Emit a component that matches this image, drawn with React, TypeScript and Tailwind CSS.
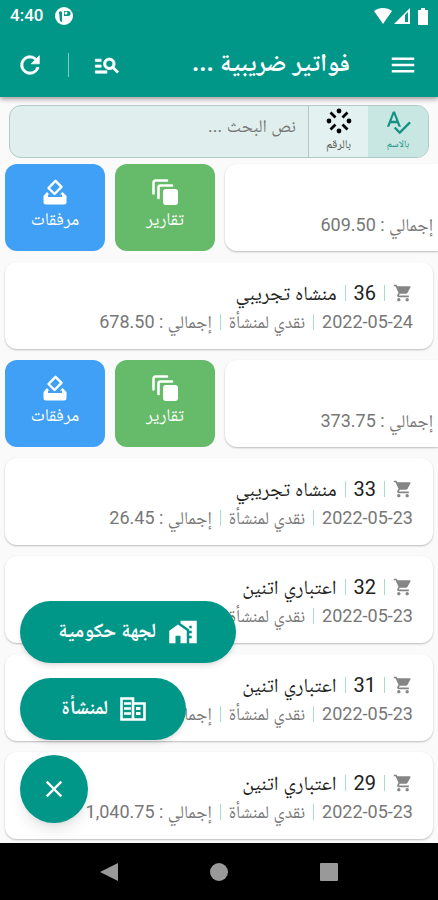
import React from "react";
import {
  MdClose,
  MdHomeWork,
  MdManageSearch,
  MdMenu,
  MdRefresh,
  MdShoppingCart,
  MdSpellcheck,
} from "react-icons/md";

type Invoice = {
  id: number;
  name: string;
  date: string;
  total: string;
  swiped?: boolean;
};

const invoices: Invoice[] = [
  { id: 37, name: "منشاه تجريبي", date: "2022-05-24", total: "609.50", swiped: true },
  { id: 36, name: "منشاه تجريبي", date: "2022-05-24", total: "678.50" },
  { id: 34, name: "منشاه تجريبي", date: "2022-05-23", total: "373.75", swiped: true },
  { id: 33, name: "منشاه تجريبي", date: "2022-05-23", total: "26.45" },
  { id: 32, name: "اعتباري اتنين", date: "2022-05-23", total: "" },
  { id: 31, name: "اعتباري اتنين", date: "2022-05-23", total: "" },
  { id: 29, name: "اعتباري اتنين", date: "2022-05-23", total: "1,040.75" },
];

const CopiesIcon = () => (
  <svg viewBox="0 0 26 26" className="size-[26px]" fill="none" stroke="currentColor" strokeWidth="2.6" strokeLinecap="round">
    <path d="M1.500 14.500V3.500a2 2 0 0 1 2-2h11.500" />
    <path d="M6.500 19V8.500a2 2 0 0 1 2-2h11.500" />
    <rect x="11" y="10" width="15" height="16" rx="3" fill="currentColor" stroke="none" />
  </svg>
);

const BallotIcon = () => (
  <svg viewBox="0 0 24 26" className="h-[26px] w-6" fill="currentColor">
    <path d="M12.500 1.800L18.500 7.800L11.500 15L5.500 9z" fill="none" stroke="currentColor" strokeWidth="2.400" strokeLinejoin="round" />
    <path d="M4 13l2.500 2.500H5V18h14v-2.500h-2l2.500-2.500 4 4V23a2.500 2.500 0 0 1-2.500 2.500H3A2.500 2.500 0 0 1 .5 23v-6z" />
  </svg>
);

const BurstIcon = () => (
  <svg viewBox="0 0 26 26" className="size-[26px]" stroke="currentColor" strokeWidth="2.8" fill="currentColor">
    <path d="M4.500 4.500l5 5M21.500 4.500l-5 5M4.500 21.500l5-5M21.500 21.500l-5-5" />
    <g stroke="none">
      <circle cx="13" cy="3" r="2.400" />
      <circle cx="13" cy="23" r="2.400" />
      <circle cx="3" cy="13" r="2.400" />
      <circle cx="23" cy="13" r="2.400" />
    </g>
  </svg>
);

const BuildingIcon = () => (
  <svg viewBox="0 0 26 24" className="h-6 w-[26px]" fill="none" stroke="currentColor" strokeWidth="2.600">
    <path d="M1.500 1.500h11.500v21H1.500zM13 6.500h11.500v16H13" />
    <path d="M4 6.500h7M4 11.500h7M4 16.500h7" />
    <path d="M16 11.500h4.500M16 16.500h4.500" strokeWidth="3" />
  </svg>
);

const StatusBar = () => (
  <div dir="ltr" className="flex h-8 items-center justify-between pl-[10px] pr-2">
    <div className="flex items-center gap-3">
      <span className="text-[17px] font-medium">4:40</span>
      <svg viewBox="0 0 18 18" className="size-[18px]">
        <circle cx="9" cy="9" r="9" fill="#fff" />
        <path d="M4 5a2 2 0 0 1 3 0v10l-2-1zM9 4h4a2 2 0 0 1 0 5H9z" fill="#009688" />
        <circle cx="11" cy="6" r="1.500" fill="#fff" />
      </svg>
    </div>
    <div className="flex items-center gap-[2px]">
      <svg viewBox="0 0 18 16" className="h-4 w-[18px]" fill="currentColor">
        <path d="M0 3C5-1 13-1 18 3L9 16z" />
      </svg>
      <svg viewBox="0 0 16 16" className="size-4">
        <path d="M16 0v16H0z" fill="#fff" />
        <path d="M11 7l3-3V14h-3z" fill="#009688" />
      </svg>
      <svg viewBox="0 0 18 17" className="h-[17px] w-[18px]" fill="currentColor">
        <path d="M9 0h4v2h3v15H6V2h3z" />
      </svg>
    </div>
  </div>
);

const Header = () => (
  <header className="z-10 bg-[#009688] text-white shadow-[0_2px_5px_rgba(0,0,0,0.4)]">
    <StatusBar />
    <div className="flex h-[65px] items-center pl-4 pr-5">
      <button type="button" aria-label="القائمة">
        <MdMenu className="size-[30px]" />
      </button>
      <h1 className="flex-1 truncate pb-1 pr-[38px] text-[25px] font-bold">فواتير ضريبية ...</h1>
      <button type="button" aria-label="بحث متقدم">
        <MdManageSearch className="size-7 [&>path:last-child]:stroke-[0.6]" />
      </button>
      <span className="mx-6 h-6 w-px bg-white/50" />
      <button type="button" aria-label="تحديث">
        <MdRefresh className="size-7 [&>path:last-child]:stroke-[0.6]" />
      </button>
    </div>
  </header>
);

const SearchBox = () => (
  <form className="mx-[9px] mt-2 flex h-[53px] overflow-hidden rounded-xl border border-[#b0c9c6] bg-[#e0efed]">
    <label className="flex w-[60px] flex-col items-center bg-[#c8e6e2] pt-[2px] text-[#159184]">
      <input type="radio" name="mode" defaultChecked className="sr-only" />
      <MdSpellcheck className="size-7" />
      <span className="text-[10px] leading-4">بالاسم</span>
    </label>
    <label className="flex w-[60px] flex-col items-center border-l border-[#b0c9c6] bg-[#e3f2f0] pt-[2px] text-black">
      <input type="radio" name="mode" className="sr-only" />
      <BurstIcon />
      <span className="text-xs leading-5 text-[#555]">بالرقم</span>
    </label>
    <input
      type="text"
      aria-label="نص البحث"
      placeholder="نص البحث ..."
      className="min-w-0 flex-1 bg-transparent px-3 pb-3 text-lg outline-none placeholder:text-[#777]"
    />
  </form>
);

const Divider = () => <span className="h-4 w-px bg-[#a9dccb]" />;

const Total = ({ value }: { value: string }) => (
  <span>
    إجمالي{value && ` : ${value}`}
  </span>
);

const InvoiceCard = ({ invoice }: { invoice: Invoice }) => (
  <article
    dir="rtl"
    className="h-[87px] flex-1 rounded-xl bg-white pr-5 pt-[17px] shadow-[0_1px_2px_rgba(0,0,0,0.25)]"
  >
    <div className="flex h-7 items-center gap-2 whitespace-nowrap text-xl text-[#222]">
      <MdShoppingCart className="size-5 text-[#858585]" />
      <Divider />
      <span>{invoice.id}</span>
      <Divider />
      <span>{invoice.name}</span>
    </div>
    <div className="flex h-[30px] items-center gap-2 whitespace-nowrap text-lg text-[#777]">
      <span>{invoice.date}</span>
      <Divider />
      <span>نقدي لمنشأة</span>
      <Divider />
      <Total value={invoice.total} />
    </div>
  </article>
);

// The card slides off to the right, so only its last field stays in view
const SwipedCard = ({ invoice }: { invoice: Invoice }) => (
  <>
    <button
      type="button"
      className="flex h-[87px] w-[100px] shrink-0 flex-col items-center rounded-xl bg-[#3fa0f5] pt-[15px] text-white"
    >
      <BallotIcon />
      <span className="text-lg leading-7">مرفقات</span>
    </button>
    <button
      type="button"
      className="flex h-[87px] w-[100px] shrink-0 flex-col items-center rounded-xl bg-[#66bb6a] pt-[15px] text-white"
    >
      <CopiesIcon />
      <span className="text-lg leading-7">تقارير</span>
    </button>
    <article
      dir="rtl"
      className="-mr-[5px] flex h-[87px] flex-1 items-end rounded-l-xl bg-white pb-3 pr-[5px] shadow-[0_1px_2px_rgba(0,0,0,0.25)]"
    >
      <div className="whitespace-nowrap text-lg text-[#777]">
        <Total value={invoice.total} />
      </div>
    </article>
  </>
);

const FloatingMenu = () => (
  <div dir="ltr" className="absolute bottom-5 left-5 flex flex-col items-start gap-[15px] text-white">
    <button
      type="button"
      className="flex h-[62px] w-[216px] items-center justify-end gap-3 rounded-full bg-[#009688] pr-[38px] shadow-md"
    >
      <span className="pb-1 text-xl font-bold">لجهة حكومية</span>
      <MdHomeWork className="size-[30px]" />
    </button>
    <button
      type="button"
      className="flex h-[62px] w-[166px] items-center justify-end gap-3 rounded-full bg-[#009688] pr-10 shadow-md"
    >
      <span className="pb-1 text-xl font-bold">لمنشأة</span>
      <BuildingIcon />
    </button>
    <button
      type="button"
      aria-label="إغلاق"
      className="flex size-[68px] items-center justify-center rounded-full bg-[#009688] shadow-lg"
    >
      <MdClose className="size-7" />
    </button>
  </div>
);

const NavBar = () => (
  <nav dir="ltr" className="flex h-[58px] items-center justify-center gap-[90px] bg-black text-[#999]">
    <button type="button" aria-label="رجوع">
      <svg viewBox="0 0 20 20" className="size-5" fill="currentColor">
        <path d="M19 1v18L1 10z" />
      </svg>
    </button>
    <button type="button" aria-label="الرئيسية">
      <svg viewBox="0 0 20 20" className="size-5" fill="currentColor">
        <circle cx="10" cy="10" r="9" />
      </svg>
    </button>
    <button type="button" aria-label="التطبيقات">
      <svg viewBox="0 0 20 20" className="size-5" fill="currentColor">
        <rect x="1" y="1" width="18" height="18" rx="1" />
      </svg>
    </button>
  </nav>
);

const App = () => {
  return (
    <div
      dir="rtl"
      className="flex min-h-screen flex-col bg-[#fafafa] font-['Roboto','Noto_Naskh_Arabic',serif]"
    >
      <Header />
      <main className="relative flex-1 overflow-hidden">
        <SearchBox />
        <ul className="flex flex-col gap-[11px] px-[5px] pb-1 pt-[6px]">
          {invoices.map((invoice) => (
            <li key={invoice.id} dir="ltr" className="flex gap-[10px]">
              {invoice.swiped ? <SwipedCard invoice={invoice} /> : <InvoiceCard invoice={invoice} />}
            </li>
          ))}
        </ul>
        <FloatingMenu />
      </main>
      <NavBar />
    </div>
  );
};

export default App;
